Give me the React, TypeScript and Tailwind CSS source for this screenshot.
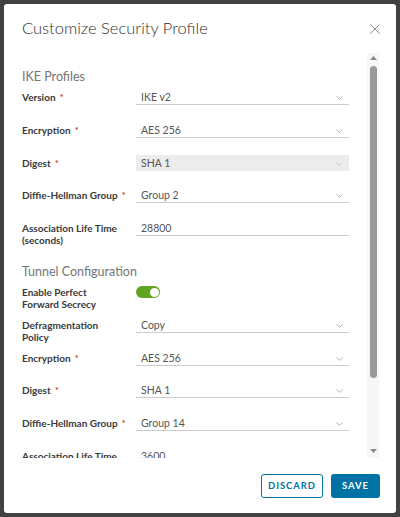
import React from 'react';

type Row = {
  label: string[];
  required?: boolean;
  value?: string;
  kind: 'select' | 'input' | 'toggle' | 'disabled';
};

const ikeRows: Row[] = [
  { label: ['Version'], required: true, value: 'IKE v2', kind: 'select' },
  { label: ['Encryption'], required: true, value: 'AES 256', kind: 'select' },
  { label: ['Digest'], required: true, value: 'SHA 1', kind: 'disabled' },
  { label: ['Diffie-Hellman Group'], required: true, value: 'Group 2', kind: 'select' },
  { label: ['Association Life Time', '(seconds)'], value: '28800', kind: 'input' },
];

const tunnelRows: Row[] = [
  { label: ['Enable Perfect', 'Forward Secrecy'], kind: 'toggle' },
  { label: ['Defragmentation', 'Policy'], value: 'Copy', kind: 'select' },
  { label: ['Encryption'], required: true, value: 'AES 256', kind: 'select' },
  { label: ['Digest'], required: true, value: 'SHA 1', kind: 'select' },
  { label: ['Diffie-Hellman Group'], required: true, value: 'Group 14', kind: 'select' },
  { label: ['Association Life Time', '(seconds)'], value: '3600', kind: 'input' },
];

const Chevron = ({ light }: { light?: boolean }) => (
  <svg width="7" height="4" viewBox="0 0 7 4" className="absolute right-[6px] top-[7px]">
    <path d="M0.5 0.5 L3.5 3.3 L6.5 0.5" fill="none" stroke={light ? '#c4c4c4' : '#a8a8a8'} strokeWidth="0.9" />
  </svg>
);

const Field = ({ row }: { row: Row }) => {
  if (row.kind === 'toggle') {
    return (
      <div className="mt-[2px] flex h-[12px] w-[24px] items-center justify-end rounded-full bg-[#62a420] pr-[1.5px]">
        <div className="h-[9px] w-[9px] rounded-full bg-white" />
      </div>
    );
  }
  const disabled = row.kind === 'disabled';
  return (
    <div
      className={`relative h-[16px] w-[213px] border-b pl-[5px] text-[10.5px] leading-[16px] text-[#565656] ${
        disabled ? 'border-transparent bg-[#ececec]' : 'border-[#cccccc]'
      }`}
    >
      {row.value}
      {row.kind !== 'input' && <Chevron light={disabled} />}
    </div>
  );
};

const FormRow = ({ row }: { row: Row }) => (
  <div className="flex h-[16px] items-start">
    <div className="mt-[2px] w-[114px] shrink-0 whitespace-nowrap text-[10px] font-bold leading-[12px] text-[#3a3a3a]">
      {row.label.map((l, i) => (
        <div key={i}>
          {l}
          {row.required && i === 0 && <span className="ml-[4px] font-normal text-[#c92100]">*</span>}
        </div>
      ))}
    </div>
    <Field row={row} />
  </div>
);

const Section = ({ title, rows, className }: { title: string; rows: Row[]; className?: string }) => (
  <div className={className}>
    <div className="h-[22px] text-[12.5px] leading-[20px] text-[#747474]">{title}</div>
    <div className="flex flex-col gap-[16.75px]">
      {rows.map((r, i) => (
        <FormRow key={i} row={r} />
      ))}
    </div>
  </div>
);

export default function App() {
  return (
    <div
      className="flex h-[517px] w-[400px] items-start bg-[#424242] pl-[4px] pt-[4px]"
      style={{ fontFamily: 'Lato, "Open Sans", sans-serif' }}
    >
      <div className="flex h-[509px] w-[392px] flex-col rounded-[3px] bg-white">
        {/* header */}
        <div className="flex h-[49px] shrink-0 items-start justify-between pl-[18px] pr-[16px] pt-[12px]">
          <h3 className="text-[16.5px] font-light leading-[24px] text-[#313131]">Customize Security Profile</h3>
          <button className="mt-[8px]" aria-label="Close">
            <svg width="10" height="10" viewBox="0 0 10 10">
              <path d="M0.5 0.5 L9.5 9.5 M9.5 0.5 L0.5 9.5" stroke="#8c8c8c" strokeWidth="1" />
            </svg>
          </button>
        </div>

        {/* body */}
        <div className="flex h-[405px] shrink-0">
          <div className="flex-1 overflow-hidden pl-[18px]">
            <Section title="IKE Profiles" rows={ikeRows} className="pt-[14px]" />
            <Section title="Tunnel Configuration" rows={tunnelRows} className="pt-[26px]" />
          </div>
          {/* scrollbar */}
          <div className="mr-[17px] flex w-[12px] flex-col items-center bg-[#f6f6f6]">
            <svg width="7" height="4" viewBox="0 0 7 4" className="mt-[3px]">
              <path d="M0 4 L3.5 0 L7 4 Z" fill="#888" />
            </svg>
            <div className="mt-[6px] h-[312px] w-[7px] rounded-full bg-[#9a9a9a]" />
            <div className="flex-1" />
            <svg width="7" height="4" viewBox="0 0 7 4" className="mb-[5px]">
              <path d="M0 0 L3.5 4 L7 0 Z" fill="#888" />
            </svg>
          </div>
        </div>

        {/* footer */}
        <div className="flex flex-1 items-start justify-end gap-[8px] pr-[16px] pt-[16px]">
          <button className="h-[24px] w-[62px] rounded-[3px] border border-[#0072a3] bg-white text-[9.5px] font-bold tracking-[0.9px] text-[#0072a3]">
            DISCARD
          </button>
          <button className="h-[24px] w-[49px] rounded-[3px] bg-[#0072a3] text-[9.5px] font-bold tracking-[0.9px] text-white">
            SAVE
          </button>
        </div>
      </div>
    </div>
  );
}
